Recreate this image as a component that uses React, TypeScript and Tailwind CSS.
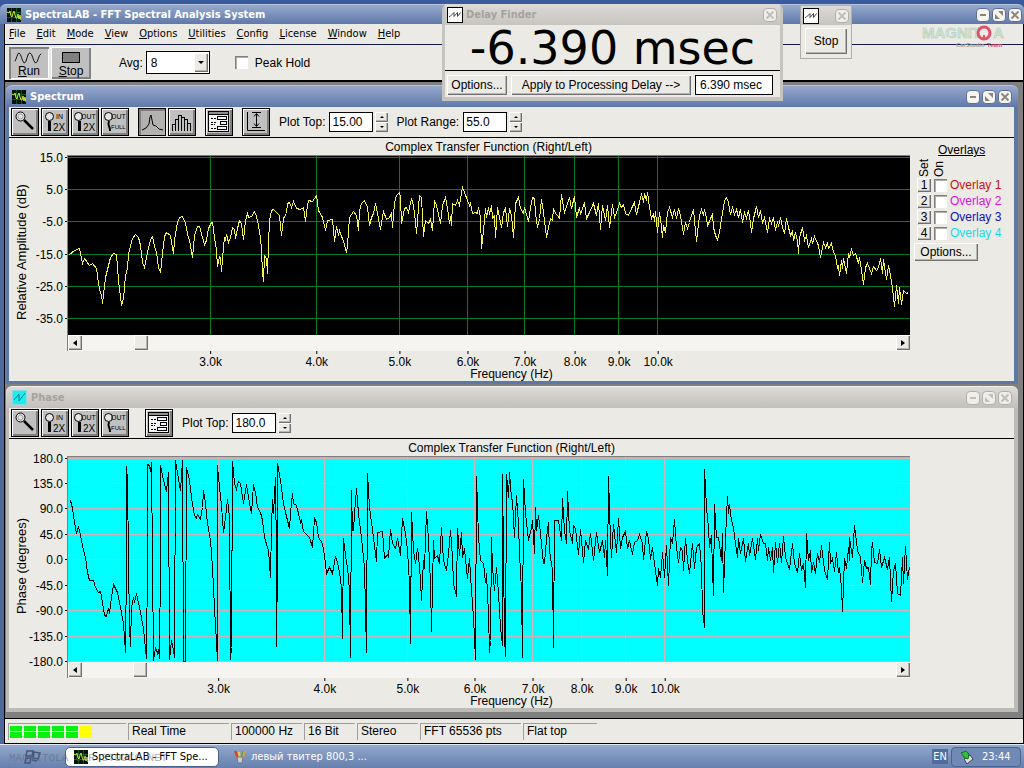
import React, { useState } from "react";
import clsx from "clsx";

type Tick = { at: number; label: string };

const PLOT_WIDTH = 842;
const SPECTRUM_HEIGHT = 179;
const PHASE_HEIGHT = 205;

const MENU = ["File", "Edit", "Mode", "View", "Options", "Utilities", "Config", "License", "Window", "Help"];

const OVERLAYS = [
  { id: 1, color: "text-[#d01010]" },
  { id: 2, color: "text-[#e010e0]" },
  { id: 3, color: "text-[#1010c0]" },
  { id: 4, color: "text-[#10e0e8]" },
];

const STATUS = [
  { text: "Real Time", width: "w-[101px]" },
  { text: "100000 Hz", width: "w-[71px]" },
  { text: "16 Bit", width: "w-[51px]" },
  { text: "Stereo", width: "w-[61px]" },
  { text: "FFT 65536 pts", width: "w-[101px]" },
  { text: "Flat top", width: "w-[74px]" },
];

const SPECTRUM_X: Tick[] = [
  { at: 142, label: "3.0k" },
  { at: 248, label: "4.0k" },
  { at: 331, label: "5.0k" },
  { at: 399, label: "6.0k" },
  { at: 456, label: "7.0k" },
  { at: 506, label: "8.0k" },
  { at: 550, label: "9.0k" },
  { at: 589, label: "10.0k" },
];

const SPECTRUM_Y: Tick[] = [
  { at: 1, label: "15.0" },
  { at: 33, label: "5.0" },
  { at: 65, label: "-5.0" },
  { at: 98, label: "-15.0" },
  { at: 130, label: "-25.0" },
  { at: 162, label: "-35.0" },
];

const PHASE_X: Tick[] = [
  { at: 150, label: "3.0k" },
  { at: 256, label: "4.0k" },
  { at: 339, label: "5.0k" },
  { at: 406, label: "6.0k" },
  { at: 464, label: "7.0k" },
  { at: 513, label: "8.0k" },
  { at: 557, label: "9.0k" },
  { at: 596, label: "10.0k" },
];

const PHASE_Y: Tick[] = [
  { at: 1, label: "180.0" },
  { at: 26, label: "135.0" },
  { at: 51, label: "90.0" },
  { at: 77, label: "45.0" },
  { at: 102, label: "0.0" },
  { at: 128, label: "-45.0" },
  { at: 153, label: "-90.0" },
  { at: 179, label: "-135.0" },
  { at: 204, label: "-180.0" },
];

const SPECTRUM_TRACE = `
1,98 6,94 11,92 14,107 16,102 21,109 24,107 28,112 30,127 32,137 33,138 34,147 37,121 42,101 45,97 48,98 50,124
53,149 55,142 57,119 59,112 60,97 64,82 67,78 70,81 72,89 74,106 76,111 79,96 82,83 84,80 86,90 88,96 90,111 92,116
94,97 96,80 98,76 102,79 105,97 106,84 109,66 111,61 114,60 117,67 120,82 121,83 124,101 126,79 129,70 131,70 134,81
136,88 138,84 140,72 143,66 144,66 146,81 148,94 149,110 151,100 152,101 153,115 155,91 156,81 157,84 158,78 160,86
162,81 164,71 166,73 167,82 169,72 171,64 173,67 175,83 177,64 179,57 180,61 183,60 186,55 188,60 190,69 192,81
193,94 194,116 195,125 196,99 198,102 199,117 200,87 201,64 203,54 205,53 209,57 211,59 213,79 215,62 218,57 219,47
221,46 223,51 225,45 228,52 232,53 235,51 237,65 239,49 240,44 244,45 248,39 250,54 254,61 257,74 259,64 264,63
266,85 268,70 270,79 271,74 275,85 278,96 279,89 281,61 285,55 288,59 290,74 291,54 293,47 296,44 299,51 301,69
303,61 305,57 307,47 309,57 312,73 315,55 318,63 321,61 323,57 324,71 326,46 328,39 331,36 332,41 333,67 336,52
338,51 340,56 343,42 345,49 347,66 348,77 350,51 351,39 353,41 355,80 357,64 360,67 362,63 364,74 366,44 368,49
372,67 374,49 377,41 379,52 381,67 382,60 383,69 384,47 387,49 389,44 391,49 393,37 394,31 396,36 399,44 401,49
402,47 404,57 407,56 409,57 410,51 412,61 413,92 415,74 417,52 418,61 420,51 421,58 423,49 424,62 426,59 427,81
429,51 431,61 433,71 435,56 437,52 439,70 441,52 443,59 445,81 447,47 450,41 452,52 455,57 456,51 460,65 462,51
464,41 466,42 467,57 469,71 471,62 473,43 475,56 477,72 478,81 480,71 482,62 484,64 485,52 487,57 489,59 491,62
493,38 495,51 496,56 499,47 501,41 503,52 506,40 508,61 511,51 512,58 516,46 518,62 521,56 525,47 528,59 530,47
532,73 534,49 537,64 539,49 541,71 544,48 546,61 548,56 551,47 553,51 555,48 557,57 560,59 563,52 566,46 568,58
571,46 573,37 575,46 576,37 578,44 579,36 581,51 583,62 585,57 586,65 587,55 589,76 591,56 592,62 594,81 595,69
597,76 599,56 601,51 604,61 606,53 608,62 610,52 612,59 614,71 615,78 617,66 619,72 621,66 622,62 625,53 626,64
628,85 631,59 633,53 635,59 636,53 638,61 639,70 642,62 644,58 645,71 647,79 649,83 651,76 653,62 655,51 656,44
658,41 660,46 662,58 664,51 666,58 668,53 670,61 672,53 674,66 676,56 678,62 680,54 682,66 683,76 685,62 688,50
690,61 692,54 694,67 696,61 699,76 701,62 703,67 705,61 707,74 709,65 710,70 712,61 714,71 716,77 718,62 720,71
722,79 724,75 725,84 727,76 729,84 730,97 731,81 734,71 736,84 738,79 740,91 743,82 744,87 746,80 749,87 750,89
752,101 755,86 757,91 759,87 760,92 763,87 765,96 767,99 769,112 770,109 771,119 773,104 774,112 775,102 778,117
780,97 781,101 783,93 785,99 787,97 790,107 791,101 793,114 795,128 797,111 799,107 801,112 803,117 805,110 808,114
810,111 812,102 814,117 815,103 818,123 820,109 822,119 824,131 825,141 826,150 828,129 830,147 831,131 833,148
835,134 838,137 840,136`;

const PHASE_TRACE = `
1,43 2,43 4,51 6,65 8,76 10,69 12,78 14,88 17,100 19,115 21,123 25,123 27,130 30,135 32,134 34,145 36,158 38,159
40,151 41,156 43,140 45,127 49,135 52,150 55,166 57,195 58,103 58,9 59,23 60,100 61,170 62,189 63,150 65,140 66,145
68,136 71,150 75,171 78,201 79,103 79,7 81,8 82,14 83,5 84,103 85,203 87,190 89,196 90,192 91,201 92,103 92,8 94,18
97,31 98,33 100,15 101,202 103,183 105,193 106,200 107,3 109,16 112,33 114,3 115,204 117,204 118,10 121,23 123,40
126,58 128,61 129,57 132,62 134,50 135,33 137,46 139,66 142,83 144,110 146,150 149,203 149,8 150,20 153,48 155,75
157,60 159,42 161,60 162,202 163,190 164,4 166,26 168,32 170,24 172,26 175,46 178,27 180,40 183,56 185,27 187,35
189,50 192,55 194,63 196,80 200,93 202,120 203,70 204,42 205,56 207,20 208,103 208,189 209,103 209,6 212,23 215,46
217,55 221,71 222,56 224,36 225,46 228,48 230,56 232,65 233,63 235,74 239,78 241,80 244,90 246,61 248,65 250,80
254,86 256,98 258,116 261,110 264,116 267,99 269,105 271,115 273,130 274,181 275,81 277,98 279,110 281,133 282,200
283,33 284,73 285,73 286,56 288,31 290,56 293,80 296,110 298,195 299,16 301,50 305,80 308,104 309,75 314,74 316,101
319,97 320,100 322,72 324,86 327,91 329,81 332,98 334,61 337,76 339,93 341,126 342,186 343,55 345,93 347,106 349,91
350,98 352,123 353,143 355,103 356,111 358,54 360,83 362,126 363,174 365,83 366,101 369,98 371,106 373,70 375,103
378,113 380,96 382,73 384,100 385,126 388,139 389,71 391,98 393,75 394,100 396,91 399,121 401,101 403,133 405,160
407,202 408,19 410,80 412,103 415,106 417,125 418,116 420,156 421,195 422,183 423,80 424,110 426,133 428,110 430,136
432,170 434,188 434,17 436,180 437,199 438,17 440,40 441,15 443,41 444,43 446,80 448,38 450,66 451,96 453,133
454,200 455,22 457,56 460,83 463,70 464,63 466,96 467,50 468,73 470,58 472,76 475,106 476,106 478,81 480,65 481,93
484,113 485,190 486,63 490,63 493,83 494,41 496,73 498,86 499,34 501,73 504,86 505,68 507,71 510,97 512,72 515,105
517,83 520,92 522,76 525,103 528,75 531,95 534,83 536,100 537,83 539,118 540,19 542,83 543,100 545,67 548,95 550,61
552,91 554,80 557,74 559,91 561,83 564,97 566,85 569,83 571,77 574,86 575,102 578,74 580,81 582,102 584,90 586,106
589,128 590,111 592,120 594,95 596,120 598,88 600,128 602,80 604,86 606,62 608,90 610,105 612,90 614,93 615,113
617,81 619,103 621,116 624,86 626,111 628,90 631,86 633,110 634,153 636,170 636,12 638,50 640,70 641,90 643,78
644,113 645,138 646,47 648,80 650,80 653,103 654,76 655,135 657,80 659,39 660,56 661,47 663,63 665,70 667,86
669,100 670,81 672,96 675,81 677,104 680,86 681,98 684,81 687,102 689,81 690,93 692,77 695,86 697,86 699,103 700,90
702,103 704,90 705,115 707,85 709,105 711,86 713,105 715,79 717,100 721,112 724,86 726,106 729,115 731,96 733,113
735,106 737,130 738,76 740,103 742,93 743,115 745,105 747,116 749,96 751,105 753,88 756,113 759,122 761,85 762,106
764,101 766,114 768,95 770,115 771,110 773,130 774,154 776,101 778,111 780,90 781,103 781,80 784,100 786,68 789,93
792,100 794,125 796,103 798,111 800,110 802,127 803,93 804,85 806,105 809,106 811,92 813,110 816,100 819,112 821,100
823,144 825,113 827,106 829,136 832,138 834,100 835,126 837,89 839,122 841,110`;

const BEVEL = "bg-[#eceae4] shadow-[inset_1px_1px_0_#fff,inset_-1px_-1px_0_#707070,inset_-2px_-2px_0_#b8b6b0]";

function TraceIcon({ className, variant = "dark" }: { className?: string; variant?: "dark" | "light" | "cyan" }) {
  if (variant === "dark") {
    return (
      <svg viewBox="0 0 14 14" className={clsx("size-[14px] shrink-0", className)} aria-hidden="true">
        <rect width="14" height="14" fill="#04140a" />
        <path d="M0 4.5H14M0 9.5H14M4.500 0V14M9.500 0V14" stroke="#0b5a1c" />
        <path d="M0 4l2 1 1-2 1 5 1 1 1-4 1-2 1 4 1 3 1 0 1-4 1 5 1-4 1 5" stroke="#c8e82a" fill="none" />
      </svg>
    );
  }
  if (variant === "cyan") {
    return (
      <svg viewBox="0 0 15 15" className={clsx("size-[15px] shrink-0", className)} aria-hidden="true">
        <rect x=".5" y=".5" width="14" height="14" fill="#19eef2" stroke="#8fd8e0" />
        <path d="M2 10l5-6v7l6-8" stroke="#0b7d88" fill="none" />
      </svg>
    );
  }
  return (
    <svg viewBox="0 0 16 16" className={clsx("size-4 shrink-0", className)} aria-hidden="true">
      <rect x=".5" y=".5" width="15" height="15" fill="#fff" stroke="#000" />
      <path d="M2 9.500h1l4-4v4l3.500-4v4l3-4" stroke="#444" fill="none" />
    </svg>
  );
}

function CaptionButton({ kind, dim }: { kind: "min" | "max" | "close"; dim?: boolean }) {
  const stroke = dim ? "#c0beb9" : "#88857c";
  return (
    <button
      aria-label={kind}
      className={clsx(
        "size-[14px] rounded-[4px] border flex items-center justify-center",
        dim ? "bg-[#f0eeea] border-[#b2b0ac]" : "bg-[#f6f4ee] border-[#5d709a]"
      )}
    >
      <svg viewBox="0 0 10 10" className="size-[10px]" stroke={stroke} fill="none">
        {kind === "min" && <path d="M2 5h6" strokeWidth="2" />}
        {kind === "max" && (
          <g fill={stroke} stroke="none">
            <path d="M4 1h5v5zM1 4l5 5H1z" />
          </g>
        )}
        {kind === "close" && <path d="M1.500 1.500l7 7M8.500 1.500l-7 7" strokeWidth="1.800" />}
      </svg>
    </button>
  );
}

function TitleBar({ title, icon, dim, className }: { title: string; icon: React.ReactNode; dim?: boolean; className?: string }) {
  return (
    <div
      className={clsx(
        "flex items-center rounded-t-[6px] border-t",
        dim
          ? "bg-linear-to-b from-[#dedad6] to-[#c2c0bb] border-[#f4f2ee] text-[#a5a29e]"
          : "bg-linear-to-b from-[#97a9cd] to-[#6079a9] border-[#b4c2dc] text-white",
        className
      )}
    >
      {icon}
      <span className="ml-1 flex-1 font-['DejaVu_Sans_Condensed','DejaVu_Sans',sans-serif] text-[11px] font-bold">{title}</span>
      <div className="flex gap-[2px]">
        <CaptionButton kind="min" dim={dim} />
        <CaptionButton kind="max" dim={dim} />
        <CaptionButton kind="close" dim={dim} />
      </div>
    </div>
  );
}

function ToolButton({ label, pressed, children }: { label: string; pressed?: boolean; children: React.ReactNode }) {
  return (
    <button
      aria-label={label}
      className={clsx(
        "block size-7 border border-black",
        pressed
          ? "bg-[#b4b2b0] shadow-[inset_2px_2px_0_#808080]"
          : "bg-[#c0c0c0] shadow-[inset_1px_1px_0_#fff,inset_-2px_-2px_0_#808080]"
      )}
    >
      <svg viewBox="0 0 26 26" className="size-[26px]" fill="none" stroke="#000">
        {children}
      </svg>
    </button>
  );
}

function ZoomGlyph({ top, bottom }: { top: string; bottom: string }) {
  const full = bottom === "FULL";
  return (
    <>
      <circle cx={top === "IN" ? 7.5 : 6.5} cy="7.500" r="4" fill="#e4e4e4" />
      {full ? <path d="M7 12q-1 3 0 5t1 5" strokeWidth="2" /> : <path d="M7.500 12v10" strokeWidth="3" />}
      <g fill="#000" stroke="none" className="font-['Liberation_Sans',sans-serif]">
        <text x={top === "IN" ? 14 : 9} y="10" fontSize="7">{top}</text>
        <text x={full ? 9 : 11} y={full ? 20 : 22} fontSize={full ? 6 : 10}>{bottom}</text>
      </g>
    </>
  );
}

function ZoomTools() {
  return (
    <div className="flex gap-[2px]">
      <ToolButton label="Zoom">
        <circle cx="8.500" cy="7.500" r="4.500" fill="#e4e4e4" />
        <circle cx="8.500" cy="7.500" r="2.500" stroke="#707070" strokeWidth=".6" />
        <path d="M12 11l9 9" strokeWidth="2.500" />
      </ToolButton>
      <ToolButton label="Zoom in 2X"><ZoomGlyph top="IN" bottom="2X" /></ToolButton>
      <ToolButton label="Zoom out 2X"><ZoomGlyph top="OUT" bottom="2X" /></ToolButton>
      <ToolButton label="Zoom out full"><ZoomGlyph top="OUT" bottom="FULL" /></ToolButton>
    </div>
  );
}

function OptionsTool() {
  return (
    <ToolButton label="Plot options">
      <g shapeRendering="crispEdges">
        <rect x="2.500" y="2.500" width="20" height="20" fill="#f4f4f4" />
        <rect x="2.500" y="2.500" width="20" height="3" fill="#909090" />
        <rect x="11.500" y="7.500" width="9" height="3" />
        <rect x="14.500" y="12.500" width="6" height="3" />
        <rect x="11.500" y="17.500" width="9" height="3" />
        <path d="M5 9h5M5 13h6M5 15h4M5 19h5" strokeDasharray="2 1" />
      </g>
    </ToolButton>
  );
}

function NumberField({ id, label, value }: { id: string; label: string; value: string }) {
  const [text, setText] = useState(value);
  const step = (delta: number) => setText((parseFloat(text) + delta).toFixed(value.split(".")[1].length));
  return (
    <div className="flex items-center">
      <label htmlFor={id}>{label}</label>
      <input
        id={id}
        value={text}
        onChange={(e) => setText(e.target.value)}
        className="ml-1 h-5 w-11 border border-black bg-white px-[2px] outline-none"
      />
      <div className="ml-[2px] flex flex-col">
        <button aria-label={`${label} up`} onClick={() => step(5)} className={clsx("h-[10px] w-[13px] flex items-center justify-center", BEVEL)}>
          <svg viewBox="0 0 4 2" className="h-[2px] w-1"><path d="M0 2l2-2 2 2z" /></svg>
        </button>
        <button aria-label={`${label} down`} onClick={() => step(-5)} className={clsx("h-[10px] w-[13px] flex items-center justify-center", BEVEL)}>
          <svg viewBox="0 0 4 2" className="h-[2px] w-1"><path d="M0 0l2 2 2-2z" /></svg>
        </button>
      </div>
    </div>
  );
}

type PlotProps = {
  yLabel: string;
  xTicks: Tick[];
  yTicks: Tick[];
  height: number;
  trace: string;
  bg: string;
  grid: string;
  line: string;
  thumb: string;
};

function Plot({ yLabel, xTicks, yTicks, height, trace, bg, grid, line, thumb }: PlotProps) {
  return (
    <div className="flex">
      <svg width="58" height={height + 6} className="-mt-[5px] shrink-0 overflow-visible text-[12px]" aria-label={yLabel}>
        <text transform={`translate(17 ${Math.round(height / 2) + 12}) rotate(-90)`} textAnchor="middle" fontSize="13">{yLabel}</text>
        {yTicks.map((t) => (
          <g key={t.label}>
            <text x="54" y={t.at + 11} textAnchor="end">{t.label}</text>
            <path d={`M56 ${t.at + 6.5}h3`} stroke="#000" />
          </g>
        ))}
      </svg>
      <div className="min-w-0 flex-1">
        <div className="border-l border-t border-[#808080]">
          <svg
            width="100%"
            height={height}
            viewBox={`0 0 ${PLOT_WIDTH} ${height}`}
            preserveAspectRatio="none"
            className="block"
            shapeRendering="crispEdges"
            fill="none"
          >
            <rect width={PLOT_WIDTH} height={height} fill={bg} />
            <g stroke={grid}>
              {xTicks.map((t) => (
                <path key={t.label} d={`M${t.at + 0.5} 0V${height}`} vectorEffect="non-scaling-stroke" />
              ))}
              {yTicks.map((t) => (
                <path key={t.label} d={`M0 ${t.at + 0.5}H${PLOT_WIDTH}`} vectorEffect="non-scaling-stroke" />
              ))}
            </g>
            {/* half a pixel keeps vertical runs on whole pixels */}
            <g transform="translate(0.5 0.5)">
              <polyline points={trace} stroke={line} vectorEffect="non-scaling-stroke" />
            </g>
          </svg>
          <div className="flex h-4 items-start bg-[#f5f4f1]">
            <button aria-label="Scroll left" className={clsx("h-[15px] w-[14px] flex items-center justify-center", BEVEL)}>
              <svg viewBox="0 0 4 6" className="h-[6px] w-1"><path d="M4 0v6L0 3z" /></svg>
            </button>
            <div className={clsx("h-[15px] w-[14px]", thumb, BEVEL)} />
            <button aria-label="Scroll right" className={clsx("ml-auto h-[15px] w-[14px] flex items-center justify-center", BEVEL)}>
              <svg viewBox="0 0 4 6" className="h-[6px] w-1"><path d="M0 0v6l4-3z" /></svg>
            </button>
          </div>
        </div>
        <svg width="100%" height="16" className="block overflow-visible text-[12px]">
          {xTicks.map((t) => {
            const x = `${((t.at + 1.5) / PLOT_WIDTH) * 100}%`;
            return (
              <g key={t.label}>
                <line x1={x} x2={x} y1="0" y2="3" stroke="#000" />
                <text x={x} y="15" textAnchor="middle">{t.label}</text>
              </g>
            );
          })}
        </svg>
      </div>
    </div>
  );
}

function OverlayPanel() {
  const [on, setOn] = useState<number[]>([]);
  const toggle = (id: number) => setOn(on.includes(id) ? on.filter((o) => o !== id) : [...on, id]);
  return (
    <aside className="w-[104px] shrink-0 pl-1 pt-1">
      <div className="pl-6 leading-4 underline">Overlays</div>
      <div className="flex h-[19px] items-end gap-[1px] pl-[3px] leading-[14px]">
        <span className="w-[14px] rotate-180 [writing-mode:vertical-rl]">Set</span>
        <span className="w-[14px] rotate-180 [writing-mode:vertical-rl]">On</span>
      </div>
      {OVERLAYS.map((o) => (
        <div key={o.id} className="flex h-4 items-center pl-[3px]">
          <button className={clsx("h-[14px] w-[14px] leading-[14px]", BEVEL)}>{o.id}</button>
          <input
            id={`overlay-${o.id}`}
            type="checkbox"
            checked={on.includes(o.id)}
            onChange={() => toggle(o.id)}
            className="ml-[3px] size-[13px] appearance-none border-l border-t border-[#808080] bg-white shadow-[inset_1px_1px_0_#b0aeaa] checked:bg-black"
          />
          <label htmlFor={`overlay-${o.id}`} className={clsx("ml-[3px] whitespace-nowrap", o.color)}>Overlay {o.id}</label>
        </div>
      ))}
      <button className={clsx("mt-[2px] h-[18px] w-16 leading-4", BEVEL)}>Options...</button>
    </aside>
  );
}

function SpectrumWindow() {
  return (
    <section>
      <TitleBar title="Spectrum" icon={<TraceIcon />} className="h-[22px] pl-[6px] pr-[6px]" />
      <div className="border-b-[3px] border-l-[3px] border-r-4 border-[#5e78a6] bg-[#eceae4]">
        <div className="flex h-[31px] items-center border-b border-black pl-[2px]">
          <ZoomTools />
          <div className="ml-[9px] flex gap-[2px]">
            <ToolButton label="Line plot" pressed>
              <path d="M3 21l4-2 3-4 1-7 1-2 1 5 1 5 3 1 3 3 4 1" />
            </ToolButton>
            <ToolButton label="Bar plot">
              <path d="M3.500 22V15h3v7M6.500 15V10h3v12M9.500 10V6h3v16M12.500 6V8h3v14M15.500 8V10h3v12M18.500 10v4h3v8" shapeRendering="crispEdges" />
            </ToolButton>
          </div>
          <div className="ml-[9px]"><OptionsTool /></div>
          <div className="ml-[9px]">
            <ToolButton label="Autoscale">
              <path d="M4.500 3v18.500H22" />
              <path d="M9 3.500h9M9 18.500h9M13.500 5v12M11 7.500l2.500-3 2.500 3M11 14.500l2.500 3 2.500-3" />
            </ToolButton>
          </div>
          <div className="ml-[9px] flex gap-2">
            <NumberField id="spectrum-top" label="Plot Top:" value="15.00" />
            <NumberField id="spectrum-range" label="Plot Range:" value="55.0" />
          </div>
        </div>
        <div className="flex">
          <div className="min-w-0 flex-1">
            <h2 className="h-[17px] pl-[58px] text-center leading-[18px]">Complex Transfer Function (Right/Left)</h2>
            <Plot
              yLabel="Relative Amplitude (dB)"
              xTicks={SPECTRUM_X}
              yTicks={SPECTRUM_Y}
              height={SPECTRUM_HEIGHT}
              trace={SPECTRUM_TRACE}
              bg="#000"
              grid="#0a7a1c"
              line="#f6f650"
              thumb="ml-[52px]"
            />
          </div>
          <OverlayPanel />
        </div>
        <div className="h-[14px] text-center leading-[14px]">Frequency (Hz)</div>
      </div>
    </section>
  );
}

function PhaseWindow() {
  return (
    <section>
      <TitleBar title="Phase" dim icon={<TraceIcon variant="cyan" />} className="h-[22px] pl-[6px] pr-[6px]" />
      <div className="border-b-4 border-l-[3px] border-r-4 border-[#bdbbb6] bg-[#eceae4]">
        <div className="flex h-[31px] items-center border-b border-black pl-[2px]">
          <ZoomTools />
          <div className="ml-4"><OptionsTool /></div>
          <div className="ml-[9px]"><NumberField id="phase-top" label="Plot Top:" value="180.0" /></div>
        </div>
        <h2 className="h-[17px] text-center leading-[18px]">Complex Transfer Function (Right/Left)</h2>
        <div className="pr-[104px]">
          <Plot
            yLabel="Phase (degrees)"
            xTicks={PHASE_X}
            yTicks={PHASE_Y}
            height={PHASE_HEIGHT}
            trace={PHASE_TRACE}
            bg="#00ffff"
            grid="#d0b4b8"
            line="#000"
            thumb="ml-[51px]"
          />
        </div>
        <div className="h-[14px] text-center leading-[14px]">Frequency (Hz)</div>
      </div>
    </section>
  );
}

function MainToolbar() {
  return (
    <div className="flex h-[37px] items-center border-b-2 border-black bg-[#eceae4] pl-1">
      <button className="flex h-8 w-10 flex-col items-center bg-[#c0c0c0] leading-3 shadow-[inset_2px_2px_0_#808080,inset_-1px_-1px_0_#fff]">
        <svg viewBox="0 0 32 15" className="mt-1 h-[14px] w-8" fill="none" stroke="#000">
          <path d="M1 11q1-2 2-5t2-4q2 1 3 5t3 6q2-1 3-6t3-5q2 1 3 5t3 6q2-1 3-5t3-5" />
        </svg>
        <span><u>R</u>un</span>
      </button>
      <button className="ml-[2px] flex h-8 w-10 flex-col items-center bg-[#c0c0c0] leading-3 shadow-[inset_1px_1px_0_#fff,inset_-2px_-2px_0_#808080]">
        <span className="mb-[2px] mt-[5px] h-[11px] w-[18px] border border-black bg-[#808080]" />
        <span><u>S</u>top</span>
      </button>
      <label htmlFor="avg" className="ml-7">Avg:</label>
      <div className="relative ml-[3px]">
        <select id="avg" defaultValue="8" className="block h-[23px] w-16 appearance-none border border-black bg-white pl-1 outline-none">
          <option>4</option>
          <option>8</option>
          <option>16</option>
        </select>
        <span className={clsx("pointer-events-none absolute right-[2px] top-[2px] flex h-[19px] w-[14px] items-center justify-center", BEVEL)}>
          <svg viewBox="0 0 6 3" className="h-[3px] w-[6px]"><path d="M0 0h6L3 3z" /></svg>
        </span>
      </div>
      <input
        id="peak"
        type="checkbox"
        className="ml-[25px] size-[13px] appearance-none border-l border-t border-[#808080] bg-white shadow-[inset_1px_1px_0_#b0aeaa] checked:bg-black"
      />
      <label htmlFor="peak" className="ml-[7px]">Peak Hold</label>
    </div>
  );
}

function StatusBar() {
  return (
    <footer className="flex h-[26px] items-center gap-[2px] border-y border-black bg-[#eceae4] pl-[3px]">
      <div className="flex h-[17px] w-[118px] items-center gap-[2px] border-l border-t border-[#a09e9a] pl-[1px]">
        {[0, 1, 2, 3, 4, 5].map((i) => (
          <div key={i} className="flex flex-col gap-[1px]">
            <span className={clsx("h-[5px] w-3", i < 5 ? "bg-[#08f010]" : "bg-[#ffff00]")} />
            <span className={clsx("h-[6px] w-3", i < 5 ? "bg-[#08f010]" : "bg-[#ffff00]")} />
          </div>
        ))}
      </div>
      {STATUS.map((s) => (
        <div key={s.text} className={clsx("h-[17px] whitespace-nowrap border-l border-t border-[#a09e9a] pl-[3px] leading-[14px]", s.width)}>
          {s.text}
        </div>
      ))}
    </footer>
  );
}

function Taskbar() {
  return (
    <nav className="relative flex h-6 items-center border-t border-[#dfe8f4] bg-linear-to-b from-[#93a9cc] to-[#667fad] pr-[3px] font-['DejaVu_Sans_Condensed','DejaVu_Sans',sans-serif] text-[11px]">
      <svg viewBox="0 0 18 16" className="ml-6 h-4 w-[18px]" fill="none" stroke="#43587f" strokeWidth="1.500">
        <path d="M3 2h6l-1 5H2zM10 3l6 1-2 6-5-1zM2 9h5l-1 5H1zM8 11l5 1" />
      </svg>
      <button className="ml-[23px] flex h-5 w-[154px] items-center rounded-[5px] border border-[#4b5f88] bg-white pl-2 text-black">
        <TraceIcon />
        <span className="ml-1 whitespace-nowrap">SpectraLAB - FFT Spe...</span>
      </button>
      <button className="ml-[14px] flex items-center text-white">
        <svg viewBox="0 0 14 14" className="size-[14px]" strokeWidth="2" fill="none">
          <path d="M2 1l3 7" stroke="#e03a20" />
          <path d="M6 2l1 7" stroke="#f2d02a" />
          <path d="M12 1l-3 8" stroke="#e8a030" />
          <path d="M10 1l-2 7" stroke="#50a040" strokeWidth="1" />
          <path d="M4 7h6l-1 6H5z" fill="#c8ccd4" stroke="#707a88" strokeWidth="1" />
        </svg>
        <span className="ml-1 whitespace-nowrap">левый твитер 800,3 ...</span>
      </button>
      <span className="ml-auto bg-[#526c9e] px-[1px] leading-[15px] text-white">EN</span>
      <div className="ml-[3px] flex h-5 w-[70px] items-center rounded-[4px] border border-[#4b6293] bg-[#7189b5] pl-2 text-white">
        <svg viewBox="0 0 14 14" className="size-[14px]">
          <path d="M4 9l6-4 3 4-6 5z" fill="#d8dde2" stroke="#39434f" />
          <path d="M1 3l5-2 3 3-1 5-3-1z" fill="#35c03a" stroke="#176b1c" />
        </svg>
        <time className="ml-2">23:44</time>
      </div>
      <span className="pointer-events-none absolute left-[9px] top-[7px] whitespace-pre font-['Liberation_Mono',monospace] text-[11px] leading-3 text-[#5a6372]/50">
        MAGNITOLA CAR STUDIO.NET
      </span>
    </nav>
  );
}

function DelayFinder() {
  return (
    <section className="absolute left-[442px] top-1 w-[341px] rounded-t-[6px] border-x-[3px] border-b-4 border-[#c6c4bf] bg-[#eceae4]">
      <div className="flex h-[21px] items-center bg-linear-to-b from-[#dedad6] to-[#c6c4bf] pl-[2px] pr-[3px]">
        <TraceIcon variant="light" />
        <span className="ml-[3px] flex-1 font-['DejaVu_Sans_Condensed','DejaVu_Sans',sans-serif] text-[11px] font-bold text-[#a5a29e]">Delay Finder</span>
        <CaptionButton kind="close" dim />
      </div>
      <output className="block h-[46px] border-b border-black text-center font-['DejaVu_Sans',sans-serif] text-[46px] leading-[46px] whitespace-nowrap">
        -6.390 msec
      </output>
      <div className="flex h-[26px] items-center gap-1 px-[2px] pt-[2px]">
        <button className={clsx("h-5 w-[60px]", BEVEL)}>Options...</button>
        <button className={clsx("h-5 w-[180px] whitespace-nowrap", BEVEL)}>Apply to Processing Delay --&gt;</button>
        <input aria-label="Delay" defaultValue="6.390 msec" className="h-5 w-[78px] border border-black bg-white px-1 outline-none" />
      </div>
    </section>
  );
}

function StopWindow() {
  return (
    <section className="absolute left-[800px] top-[5px] w-[52px] border border-[#b0aeaa] bg-[#eceae4]">
      <div className="flex h-[19px] items-center justify-between bg-linear-to-b from-[#dedad6] to-[#c6c4bf] pl-[2px] pr-[2px]">
        <TraceIcon variant="light" />
        <CaptionButton kind="close" dim />
      </div>
      <div className="px-1 pb-1 pt-[3px]">
        <button className={clsx("h-[26px] w-[42px]", BEVEL)}>Stop</button>
      </div>
    </section>
  );
}

function Logo() {
  return (
    <svg viewBox="0 0 84 32" className="absolute right-[18px] top-[18px] h-8 w-[84px] font-['Liberation_Sans_Narrow','Liberation_Sans',sans-serif] font-bold">
      <g fill="#d3e6d7" stroke="#a9c8b0" strokeWidth=".5" fontSize="15">
        <text x="0" y="20">MAGNIT</text>
        <text x="71" y="20">A</text>
      </g>
      <circle cx="62" cy="15" r="6" fill="none" stroke="#e0506c" strokeWidth="3" />
      <path d="M62 17v5" stroke="#e0506c" strokeWidth="2" />
      <text x="34" y="29" fontSize="6" fill="#9b9b9b">CarStudio</text>
      <text x="65" y="29" fontSize="6" fill="#e0506c">Team</text>
    </svg>
  );
}

export default function App() {
  return (
    <div className="relative flex min-h-screen flex-col bg-[#3a5a9e] font-['Liberation_Sans',Arial,sans-serif] text-[12px] leading-4 text-black">
      <main className="flex flex-1 flex-col pt-1">
        <TitleBar title="SpectraLAB - FFT Spectral Analysis System" icon={<TraceIcon />} className="h-5 pl-[7px] pr-[2px]" />
        <div className="flex flex-1 flex-col border-l-4 border-[#4d699c]">
          <div className="flex flex-1 flex-col border-x border-black">
            <div className="flex h-[21px] items-center gap-[11px] border-b border-[#101848] bg-[#eceae4] pl-1 font-['DejaVu_Sans_Condensed','DejaVu_Sans',sans-serif] text-[11px]">
              {MENU.map((m) => (
                <button key={m}><u>{m[0]}</u>{m.slice(1)}</button>
              ))}
            </div>
            <MainToolbar />
            <div className="flex flex-1 flex-col gap-[2px] bg-[#808080] pb-[6px] pl-[1px] pr-[5px] pt-[3px]">
              <SpectrumWindow />
              <PhaseWindow />
            </div>
            <StatusBar />
          </div>
        </div>
      </main>
      <Taskbar />
      <DelayFinder />
      <StopWindow />
      <Logo />
    </div>
  );
}
